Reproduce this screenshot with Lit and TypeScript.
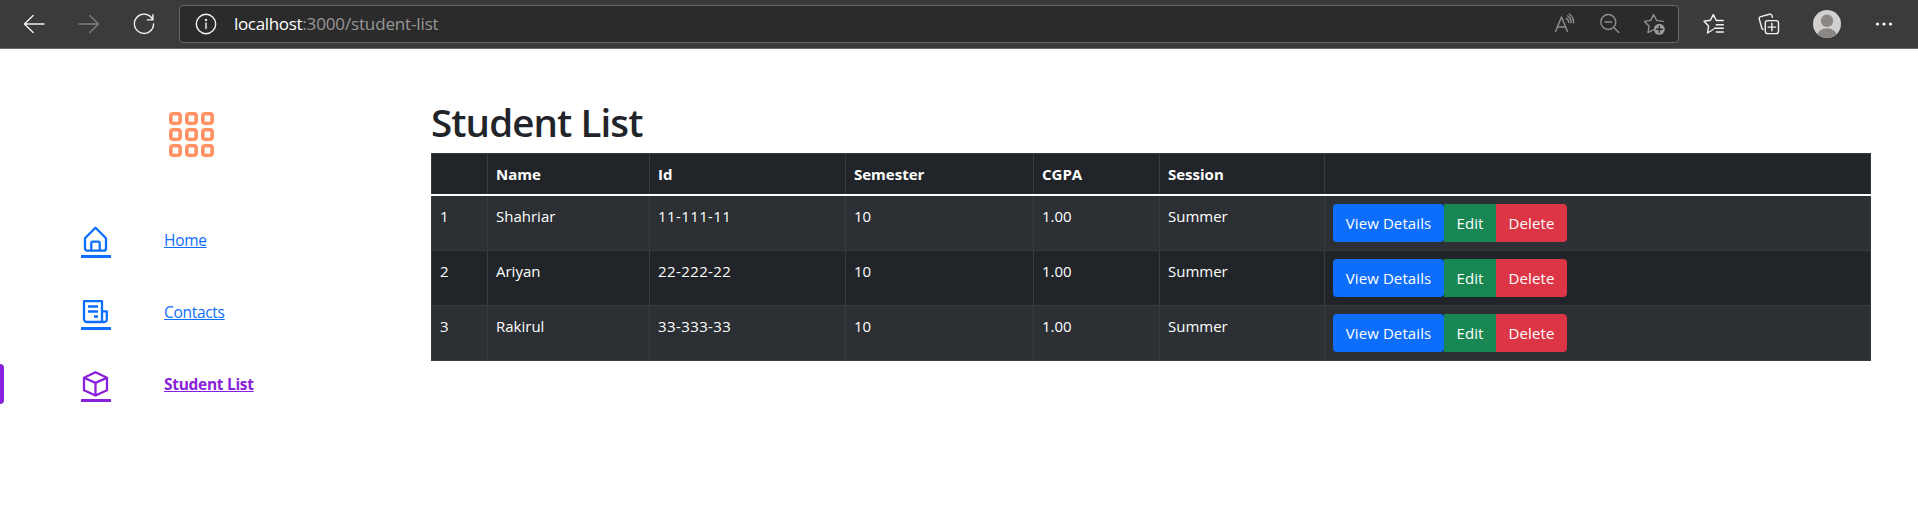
import { LitElement, html, css, svg } from "lit";
import { customElement } from "lit/decorators.js";
import { classMap } from "lit/directives/class-map.js";

interface Student { name: string; id: string; semester: string; cgpa: string; session: string; }

const students: Student[] = [
  { name: "Shahriar", id: "11-111-11", semester: "10", cgpa: "1.00", session: "Summer" },
  { name: "Ariyan", id: "22-222-22", semester: "10", cgpa: "1.00", session: "Summer" },
  { name: "Rakirul", id: "33-333-33", semester: "10", cgpa: "1.00", session: "Summer" },
];

@customElement("browser-bar")
class BrowserBar extends LitElement {
  static styles = css`
    :host { display: flex; align-items: center; box-sizing: border-box; height: 49px; padding: 0 22px 1px; background: #3b3b3b; border-bottom: 1px solid #6d6d6d; font-family: "Open Sans", sans-serif; }
    svg { display: block; flex: none; width: 24px; height: 24px; fill: none; stroke: #f2f2f2; stroke-width: 1.4; stroke-linecap: round; stroke-linejoin: round; }
    .nav { display: flex; gap: 31px; margin-right: 23px; }
    .off { stroke: #7d7d7d; }
    .address { display: flex; align-items: center; box-sizing: border-box; width: 1500px; height: 38px; margin-top: 1px; padding: 0 11px 0 14px; border: 1px solid #686868; border-radius: 4px; background: #2b2b2b; }
    .url { flex: 1; margin-left: 16px; font-size: 17px; line-height: 24px; color: #979797; letter-spacing: -0.14px; white-space: nowrap; }
    .host { color: #fff; letter-spacing: -0.33px; }
    .tools { display: flex; gap: 21px; }
    .tools svg { stroke: #8f8f8f; }
    .right { display: flex; align-items: center; }
    .star { margin-left: 23px; }
    .collections { margin-left: 31px; }
    .avatar { width: 28px; height: 28px; margin-left: 32px; stroke: none; }
    .more { margin-left: 31px; }
  `;
  render() {
    return html`
      <div class="nav">
        <svg viewBox="0 0 24 24"><path d="M22 12H2.6M11.2 3.4 2.4 12l8.8 8.6" /></svg>
        <svg class="off" viewBox="0 0 24 24"><path d="M2 12h19.4M12.8 3.4 21.600 12l-8.800 8.600" /></svg>
        <svg viewBox="0 0 24 24"><path d="M20.600 7.500A9.600 9.600 0 1 0 21.600 12M20.900 2.600v5.300h-5.600" /></svg>
      </div>
      <div class="address">
        <svg viewBox="0 0 24 24"><circle cx="12" cy="12" r="9.700" /><path d="M12 11v5.500" /><circle cx="12" cy="7.900" r=".5" /></svg>
        <div class="url"><span class="host">localhost</span>:3000/student-list</div>
        <div class="tools">
          <svg viewBox="0 0 24 24"><path d="M2.500 19.500 8.500 5l6 14.500M4.500 15h8M13.400 6.300q2.300 1.500 2.300 4.300M14.600 3.900q3.500 2.300 3.500 6.800M16.300 2q4.400 3.300 4.400 8.800" /></svg>
          <svg viewBox="0 0 24 24"><circle cx="10.300" cy="10" r="7.500" /><path d="m15.800 15.400 5 5M7 10h6.600" /></svg>
          <svg viewBox="0 0 24 24"><path d="M10.200 17.800 5 20.600l1-6.600-4.500-4.600 6.200-1L10.600 2.500l3 5.900 6.600 1" /><circle cx="16.300" cy="17.300" r="5.500" fill="#9a9a9a" stroke="none" /><path stroke="#2b2b2b" d="M13.300 17.300h6M16.300 14.300v6" /></svg>
        </div>
      </div>
      <div class="right">
        <svg class="star" viewBox="0 0 24 24"><path d="M11.200 17.500 5.500 21l1.100-6.900L2 9.300l6.300-1L11.300 2.600l3 5.900h7M14.300 12.700h7M12.300 16.300h9M14.300 20h7" /></svg>
        <svg class="collections" viewBox="0 0 24 24"><path d="M6.300 17.500 5 16.700 2.300 7.100Q1.800 5.100 3.700 4.600l8.800-2.400q1.900-.4 2.500 1.500l.4 1.700" /><rect x="8.300" y="8.600" width="13.200" height="13" rx="2.400" /><path d="M14.900 11.300v7.600M11.100 15.100h7.600" /></svg>
        <svg class="avatar" viewBox="0 0 28 28"><defs><clipPath id="disc"><circle cx="14" cy="14" r="14" /></clipPath></defs><circle cx="14" cy="14" r="14" fill="#d2d0ce" /><g clip-path="url(#disc)" fill="#8a8785"><circle cx="14" cy="10.800" r="6.200" /><ellipse cx="14" cy="26" rx="9.800" ry="7.800" /></g></svg>
        <svg class="more" viewBox="0 0 24 24"><g fill="#fff" stroke="none"><circle cx="5.500" cy="12" r="1.600" /><circle cx="12" cy="12" r="1.600" /><circle cx="18.500" cy="12" r="1.600" /></g></svg>
      </div>`;
  }
}

const icons = {
  home: svg`<path d="M5 14.200 15.500 3.700 26 14.200V24.500a2.200 2.200 0 0 1-2.200 2.200H7.200A2.200 2.200 0 0 1 5 24.500zM11.300 26.500v-7.500a1.300 1.300 0 0 1 1.300-1.300h5.800a1.300 1.300 0 0 1 1.300 1.300V26.500" />`,
  contacts: svg`<path d="M22 26.200V5.100H4V23a3 3 0 0 0 3 3h17.300a2.500 2.500 0 0 0 2.500-2.500v-8.200H22M8 10.500h10M8 15.500h10M14 20.500h4" />`,
  students: svg`<path d="M15.500 4.200 27 9.700v12.600l-11.500 5.200L4 22.300V9.700zM4 9.700l11.500 5.200L27 9.700M15.500 14.900v12.400" />`,
};

@customElement("side-nav")
class SideNav extends LitElement {
  static styles = css`
    :host { display: block; width: 431px; padding-top: 63px; box-sizing: border-box; font-family: "Open Sans", sans-serif; }
    .logo { display: block; width: 45px; height: 45px; margin-left: 169px; fill: none; stroke: #ff9166; stroke-width: 3.600; }
    .items { margin-top: 47px; }
    .item { display: flex; align-items: center; height: 72px; color: #0d6efd; }
    .marker { width: 4px; height: 40px; border-radius: 0 4px 4px 0; }
    .icon { display: block; box-sizing: border-box; width: 30px; height: 36px; margin: 0 53px 0 77px; padding-top: 2px; border-bottom: 3px solid currentColor; }
    .icon svg { display: block; width: 31px; height: 30px; fill: none; stroke: currentColor; stroke-width: 2.300; stroke-linejoin: round; margin-left: -1px; }
    a { color: inherit; font-size: 15.500px; line-height: 24px; text-decoration: underline; text-decoration-thickness: 1px; text-underline-offset: 1px; text-decoration-skip-ink: none; white-space: nowrap; }
    .active { color: #8a1fdc; }
    .active .marker { background: currentColor; }
    .active a { font-weight: 700; letter-spacing: -0.3px; }
    .item:not(.active) a { letter-spacing: -0.3px; }
  `;
  render() {
    const cells = [1.8, 17.8, 33.8];
    const item = (label: string, icon: unknown, active = false) => html`
      <div class=${classMap({ item: true, active })}>
        <span class="marker"></span>
        <span class="icon"><svg viewBox="0 0 31 30">${icon}</svg></span>
        <a>${label}</a>
      </div>`;
    return html`
      <svg class="logo" viewBox="0 0 45 45">${cells.map((y) => cells.map((x) => svg`<rect x=${x} y=${y} width="9.400" height="9.400" rx="2.200" />`))}</svg>
      <nav class="items">
        ${item("Home", icons.home)}${item("Contacts", icons.contacts)}${item("Student List", icons.students, true)}
      </nav>`;
  }
}

@customElement("student-table")
class StudentTable extends LitElement {
  static styles = css`
    :host { display: block; width: 1440px; font-family: "Open Sans", sans-serif; }
    h1 { margin: 0; padding: 49px 0 7px; font-size: 38.500px; line-height: 48px; font-weight: 600; color: #212529; letter-spacing: -0.9px; }
    .row { display: grid; grid-template-columns: 56px 162px 196px 188px 126px 165px 547px; box-sizing: border-box; height: 55px; background: #212529; color: #fff; }
    .row > div { box-sizing: border-box; border-left: 1px solid #373b3e; border-bottom: 1px solid #373b3e; padding: 8px; font-size: 15px; line-height: 24px; white-space: nowrap; }
    .row > div:last-child { border-right: 1px solid #373b3e; }
    .row:nth-child(even) { background: #2c3034; }
    .row.head { height: 43px; border-bottom: 2px solid #fff; }
    .row.head > div { border-top: 1px solid #373b3e; border-bottom: 0; font-weight: 700; }
    .row .id { letter-spacing: 0.4px; }
    .actions { display: flex; }
    .btn { box-sizing: border-box; height: 38px; padding: 6px 0; border: 0; border-radius: 4px; color: #fff; font: inherit; letter-spacing: 0.1px; text-align: center; }
    .view { width: 111px; background: #0d6efd; }
    .edit { width: 52px; background: #198754; border-radius: 0; }
    .delete { width: 71px; background: #dc3545; border-radius: 0 4px 4px 0; }
  `;
  render() {
    return html`
      <h1>Student List</h1>
      <div>
        <div class="row head">${["", "Name", "Id", "Semester", "CGPA", "Session", ""].map((t) => html`<div>${t}</div>`)}</div>
        ${students.map((s, i) => html`
          <div class="row">
            <div>${i + 1}</div><div>${s.name}</div><div class="id">${s.id}</div><div>${s.semester}</div><div>${s.cgpa}</div><div>${s.session}</div>
            <div class="actions"><button class="btn view">View Details</button><button class="btn edit">Edit</button><button class="btn delete">Delete</button></div>
          </div>`)}
      </div>`;
  }
}

@customElement("app-root")
class AppRoot extends LitElement {
  static styles = css`
    :host { display: block; height: 507px; background: #fff; overflow: hidden; }
    .page { display: flex; }
  `;
  render() {
    return html`<browser-bar></browser-bar><main class="page"><side-nav></side-nav><student-table></student-table></main>`;
  }
}
